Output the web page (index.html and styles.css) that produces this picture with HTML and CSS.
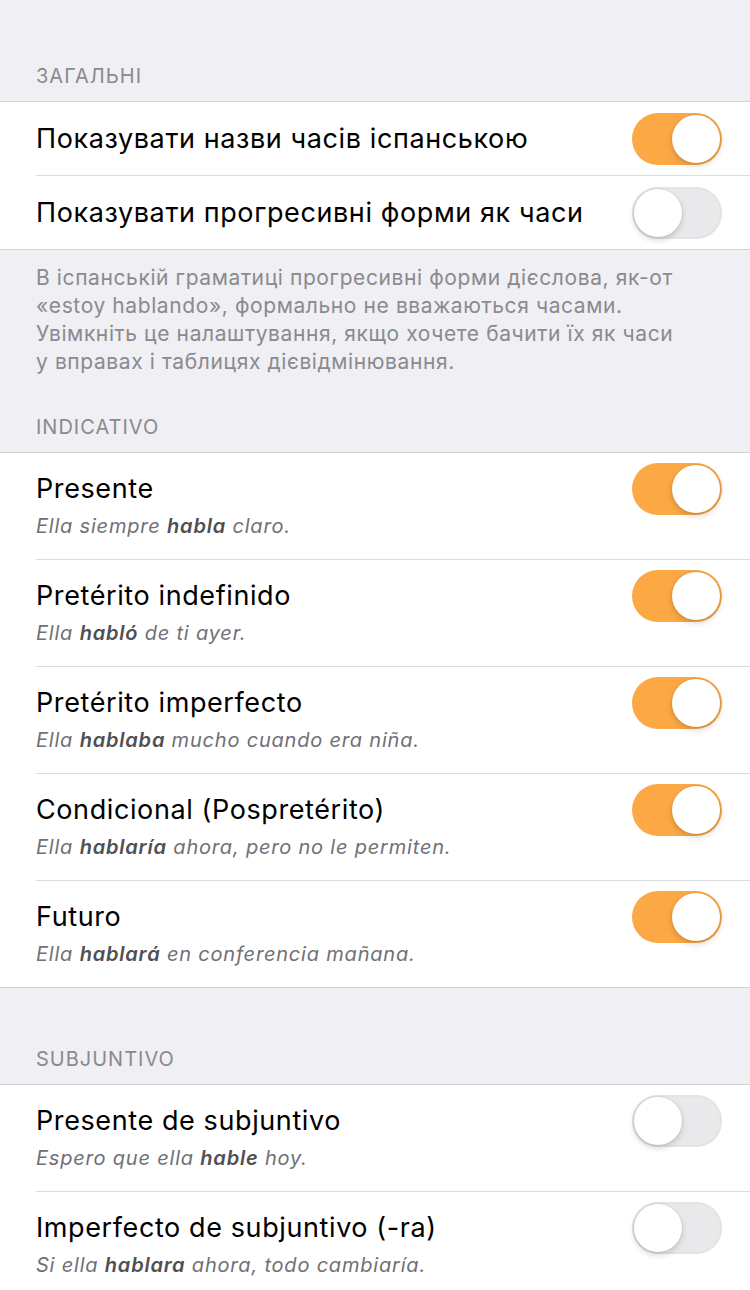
FILE: index.html
```html
<!DOCTYPE html>
<html lang="uk">
<head>
    <meta charset="UTF-8">
    <meta name="viewport" content="width=device-width, initial-scale=1.0">
    <title>Налаштування</title>
    <link rel="stylesheet" href="styles.css">
</head>
<body>
    <div class="settings">
        <div class="section-header first">Загальні</div>
        <div class="group">
            <div class="row">
                <span class="title">Показувати назви часів іспанською</span>
                <div class="toggle on"><span class="knob"></span></div>
            </div>
            <div class="row">
                <span class="title">Показувати прогресивні форми як часи</span>
                <div class="toggle"><span class="knob"></span></div>
            </div>
        </div>
        <p class="section-footer">
            В іспанській граматиці прогресивні форми дієслова, як-от «estoy hablando», формально не вважаються часами. Увімкніть це налаштування, якщо хочете бачити їх як часи у вправах і таблицях дієвідмінювання.
        </p>

        <div class="section-header">Indicativo</div>
        <div class="group">
            <div class="row detail">
                <div class="text">
                    <div class="title">Presente</div>
                    <div class="example">Ella siempre <b>habla</b> claro.</div>
                </div>
                <div class="toggle on"><span class="knob"></span></div>
            </div>
            <div class="row detail">
                <div class="text">
                    <div class="title">Pretérito indefinido</div>
                    <div class="example">Ella <b>habló</b> de ti ayer.</div>
                </div>
                <div class="toggle on"><span class="knob"></span></div>
            </div>
            <div class="row detail">
                <div class="text">
                    <div class="title">Pretérito imperfecto</div>
                    <div class="example">Ella <b>hablaba</b> mucho cuando era niña.</div>
                </div>
                <div class="toggle on"><span class="knob"></span></div>
            </div>
            <div class="row detail">
                <div class="text">
                    <div class="title">Condicional (Pospretérito)</div>
                    <div class="example">Ella <b>hablaría</b> ahora, pero no le permiten.</div>
                </div>
                <div class="toggle on"><span class="knob"></span></div>
            </div>
            <div class="row detail">
                <div class="text">
                    <div class="title">Futuro</div>
                    <div class="example">Ella <b>hablará</b> en conferencia mañana.</div>
                </div>
                <div class="toggle on"><span class="knob"></span></div>
            </div>
        </div>

        <div class="section-header spaced">Subjuntivo</div>
        <div class="group">
            <div class="row detail">
                <div class="text">
                    <div class="title">Presente de subjuntivo</div>
                    <div class="example">Espero que ella <b>hable</b> hoy.</div>
                </div>
                <div class="toggle"><span class="knob"></span></div>
            </div>
            <div class="row detail">
                <div class="text">
                    <div class="title">Imperfecto de subjuntivo (-ra)</div>
                    <div class="example">Si ella <b>hablara</b> ahora, todo cambiaría.</div>
                </div>
                <div class="toggle"><span class="knob"></span></div>
            </div>
        </div>
    </div>
</body>
</html>
```

FILE: styles.css
```css
* {
    margin: 0;
    padding: 0;
    box-sizing: border-box;
}

body {
    background-color: #efeff4;
    font-family: Inter, "Noto Sans", sans-serif;
    color: #000;
}

.settings {
    width: 100%;
}

/* grouped list section titles */
.section-header {
    padding: 0 36px 13px;
    font-size: 20px;
    line-height: 24px;
    letter-spacing: 1px;
    color: #8a8a8f;
    text-transform: uppercase;
}

.section-header.first {
    padding-top: 64px;
}

.section-header.spaced {
    padding-top: 59px;
}

.section-footer {
    padding: 14px 60px 39px 36px;
    font-size: 21px;
    line-height: 28px;
    letter-spacing: 0.6px;
    color: #8a8a8f;
}

.group {
    background-color: #fff;
    border-top: 1px solid #d1d1d6;
    border-bottom: 1px solid #d1d1d6;
}

.row {
    display: flex;
    align-items: center;
    justify-content: space-between;
    margin-left: 36px;
    padding-right: 28px;
    height: 74px;
    border-bottom: 1px solid #dcdce0;
}

.row:last-child {
    border-bottom: none;
    height: 73px;
}

.title {
    font-size: 27px;
    line-height: 32px;
    letter-spacing: 0.6px;
}

.row.detail {
    align-items: flex-start;
    height: 107px;
    padding-top: 10px;
}

.row.detail:last-child {
    height: 106px;
}

.row.detail .text {
    padding-top: 10px;
}

.example {
    margin-top: 8px;
    font-size: 20px;
    line-height: 26px;
    letter-spacing: 0.8px;
    font-style: italic;
    color: #707075;
}

.example b {
    color: #505053;
    font-weight: 600;
}

/* iOS style switch */
.toggle {
    position: relative;
    flex-shrink: 0;
    width: 90px;
    height: 52px;
    border-radius: 26px;
    background-color: #e9e9eb;
    box-shadow: inset 0 0 0 2px #e4e4e7;
}

.toggle .knob {
    position: absolute;
    top: 2px;
    left: 2px;
    width: 48px;
    height: 48px;
    border-radius: 50%;
    background-color: #fff;
    box-shadow: 0 3px 6px rgba(0, 0, 0, 0.16), 0 0 0 1px rgba(0, 0, 0, 0.05);
}

.toggle.on {
    background-color: #fca845;
    box-shadow: none;
}

.toggle.on .knob {
    left: 40px;
}
```
